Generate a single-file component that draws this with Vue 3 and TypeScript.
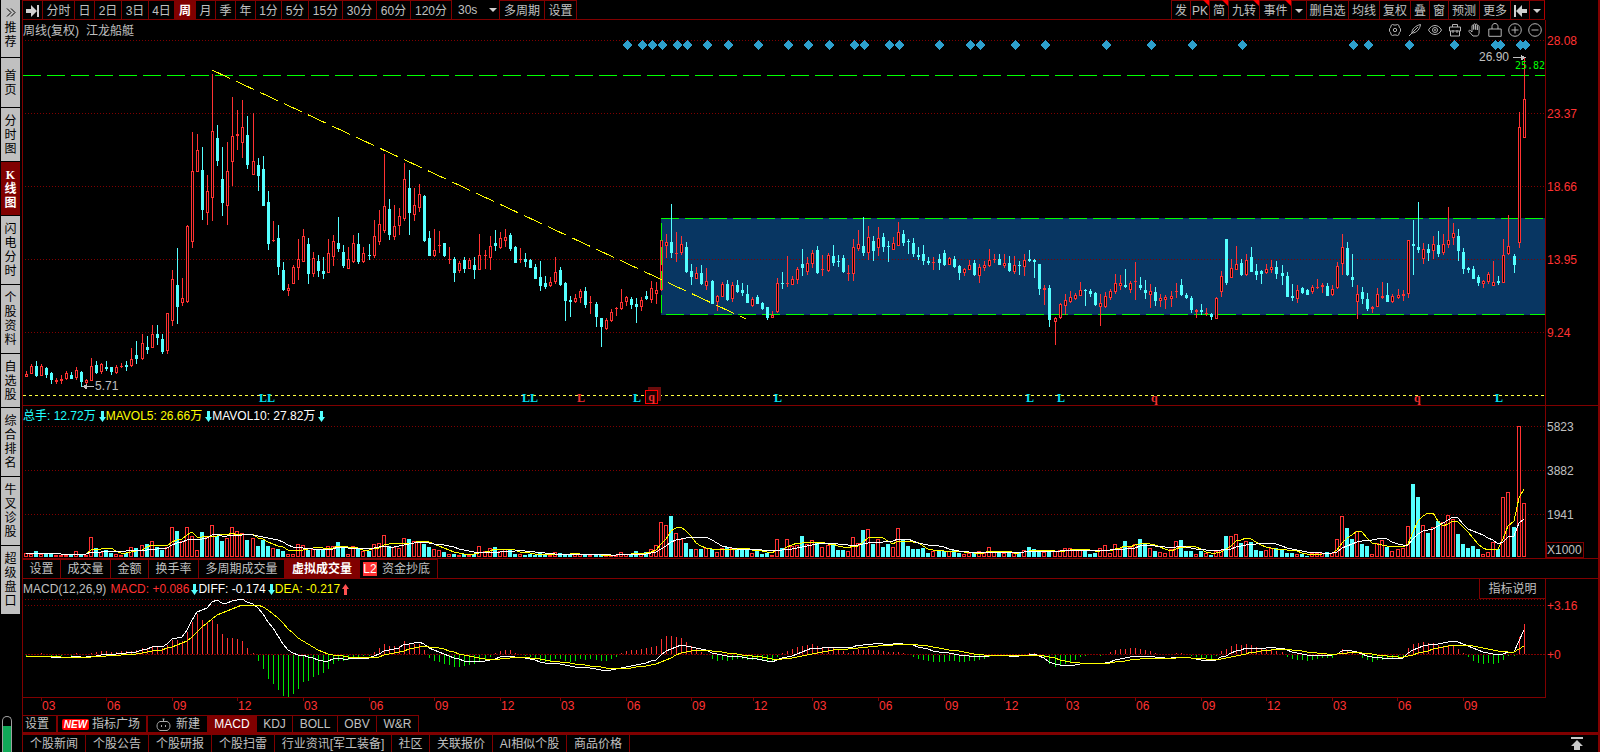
<script setup lang="ts">
interface Candle {
  x: number
  up: boolean
  high: number
  top: number
  bottom: number
  low: number
  volume: number
}

interface Item {
  label: string
  width: number
  active?: boolean
  flag?: boolean
}

// Plot area shared by the three stacked charts.
const LEFT = 23
const WIDTH = 1522
const VOLUME_BASE = 557
const MACD_ZERO = 654

// Weekly bars: direction, high, body top, body bottom, low.
const barSource = `
r371 374 376 376,r364 366 373 373,c361 366 375 376,r364 366 375 375,c367 368 374 377,c372 373 379 383,r378 380 381 383,r375 379 380 383,
r371 373 378 379,c372 375 378 378,r367 370 377 379,c371 372 381 386,r379 380 382 383,r358 366 380 380,c361 365 372 373,r363 364 371 373,
c361 367 368 370,c367 367 371 374,r365 367 372 373,r363 366 366 367,c361 365 366 370,r348 359 365 366,c341 355 358 363,r334 343 358 359,
c336 347 349 353,r325 334 347 347,c325 334 337 344,c334 339 351 353,r313 313 350 353,r270 279 320 325,c248 285 306 323,r278 298 302 305,
r225 226 301 302,r132 171 241 247,r134 150 171 171,c147 170 209 219,r175 191 212 224,r74 131 197 220,c125 138 160 165,c147 179 202 215,
r142 171 205 224,r97 136 161 185,r110 134 135 149,r100 127 142 157,c116 135 164 168,r113 161 174 174,c158 165 175 190,c156 169 205 205,
c191 202 243 249,r221 240 240 241,c225 238 266 274,c262 270 289 290,r284 288 290 295,r265 267 283 283,r239 259 267 279,r229 236 261 261,
c238 244 273 283,r252 258 273 276,c255 261 270 276,c257 271 273 278,r239 253 272 272,r235 241 256 265,c217 243 248 251,c245 252 265 267,
r247 259 268 268,r235 243 261 262,c233 244 261 263,r247 253 261 262,c244 255 255 259,r220 236 255 257,r210 224 241 244,r154 206 230 232,
c199 209 234 239,r205 226 236 239,r208 216 225 234,r163 179 218 220,c170 188 212 234,r188 205 214 220,r184 194 207 211,c195 196 240 241,
c231 238 255 255,r229 250 255 256,r231 245 245 252,c243 243 255 256,r247 259 259 263,c257 259 272 281,r261 263 270 272,c257 260 268 272,
r258 260 268 268,c257 265 269 278,r234 255 269 269,r250 255 255 268,r236 246 257 269,c230 243 245 250,r232 238 247 248,r229 237 240 246,
c233 235 248 250,c246 247 262 262,r248 259 259 262,c253 259 261 266,c259 260 267 267,c264 267 278 278,c261 277 285 290,c276 283 286 288,
r277 282 285 286,r257 272 281 283,c267 270 284 285,c282 283 300 320,c296 300 301 316,r294 298 301 302,r289 291 297 302,c287 291 304 307,
r296 302 302 313,c302 304 316 326,c318 318 326 346,r318 320 328 329,r309 312 320 321,r307 308 308 315,r289 302 308 309,r296 297 301 305,
c297 299 304 308,c298 304 306 322,r297 300 306 310,c291 296 298 299,r281 288 299 302,r282 290 293 303,r240 240 289 290,r234 242 245 257,
c204 242 252 257,r232 253 253 261,r236 244 252 254,c242 247 271 272,c264 271 276 284,r267 273 278 278,c265 273 283 284,r268 281 285 289,
c280 281 303 303,r295 296 301 310,r282 284 296 296,c280 284 299 300,r282 285 298 301,c280 285 291 292,c283 290 292 295,c285 294 302 302,
r297 299 305 306,c295 297 303 303,c302 303 308 309,c307 307 317 319,r311 315 317 317,r278 283 311 312,c272 283 283 288,r256 283 283 286,
r276 279 284 284,r267 269 279 283,c249 264 267 275,r257 263 271 274,r250 253 263 267,c246 250 272 273,r255 269 269 275,r253 255 270 271,
c245 256 262 265,c255 261 261 266,c255 258 271 272,r265 273 273 280,r239 247 273 280,r230 244 248 250,c217 246 252 255,r226 237 252 259,
c236 241 250 260,r227 238 247 255,c233 237 246 251,c241 246 246 261,r237 243 249 249,r222 232 245 245,c230 234 242 245,c239 241 241 253,
c238 243 253 256,c247 255 256 259,c245 254 260 264,c257 261 262 264,r257 262 262 269,c254 259 262 269,c250 253 264 265,r257 258 264 264,
c256 259 266 267,c265 266 272 279,r268 269 272 275,r260 265 269 269,c260 263 274 275,r264 267 275 282,r261 265 267 270,r249 260 265 266,
r254 259 259 262,c254 259 264 264,r254 263 265 267,c256 263 270 271,r256 265 271 273,c261 265 265 274,r254 260 266 275,c250 259 260 261,
c259 260 261 277,c264 264 288 294,r285 288 289 304,c285 288 319 326,r317 318 321 344,r303 304 317 318,r294 300 305 314,r291 297 301 302,
r293 295 298 299,r282 290 295 295,c289 290 290 305,c289 291 293 296,c292 293 304 305,r294 303 306 325,r292 296 306 307,r289 291 297 299,
r274 283 291 293,r275 283 285 289,c269 285 286 287,r281 283 289 292,r262 281 281 299,c277 285 287 289,c280 290 292 298,r284 291 294 307,
c287 292 300 305,r294 298 300 306,r295 297 299 308,r291 296 298 306,r283 291 291 297,c279 285 294 295,c293 295 297 298,c296 298 309 312,
r309 310 311 317,c304 310 311 314,r308 313 313 315,c313 314 316 319,r297 298 318 318,r271 276 291 296,c239 239 282 284,r259 268 277 277,
r246 264 269 269,c259 263 274 275,r254 260 274 275,c247 257 271 271,c264 271 274 279,c270 271 273 283,r264 269 272 273,r260 267 269 272,
c261 267 273 278,c265 273 275 284,c272 276 296 296,c284 296 297 300,r285 290 298 302,c287 288 292 293,c289 290 294 294,r285 287 291 293,
r279 287 287 288,r283 285 286 292,c283 286 295 295,r285 289 294 295,r262 266 287 288,r234 247 263 274,c242 248 274 275,c254 277 279 286,
r285 294 301 318,c287 292 298 303,c293 299 308 310,r306 307 308 312,r288 294 306 306,r282 296 297 298,c283 295 301 301,r294 296 301 302,
r289 295 297 298,r290 294 295 300,r240 240 293 297,c220 244 245 274,c202 247 249 252,r243 249 258 263,c244 249 252 260,r236 244 250 258,
c231 245 253 256,r234 244 252 254,r207 240 244 247,r223 233 237 244,c229 236 250 260,c248 252 268 273,c267 268 269 272,c266 269 278 278,
c275 277 282 285,r280 281 283 287,r272 274 281 283,r261 282 285 285,c276 281 282 284,r239 255 282 282,r215 246 253 254,c254 256 264 272,
r112 127 242 247,r57 99 137 137`

const volumeSource = `
4 3 6 3 4 3 2 2 2 3 6 3 2 20 9 5 7 4 3 2 4 10 9 12 13 16 10 7 10 30 26 16 30 21 7 25 20 32 21 16 19 30 26 24 17 19 11 17 11 9
8 6 3 3 13 12 7 8 8 8 11 11 15 9 3 11 8 6 6 13 14 22 11 10 9 19 18 16 16 13 10 8 7 5 3 3 2 3 2 3 11 6 9 10 6 8 7 3 3 2
3 2 4 2 2 5 4 3 3 3 3 3 2 2 2 2 2 2 5 3 3 6 3 5 8 12 35 32 41 24 18 14 8 8 8 9 8 5 9 10 9 8 8 8 4 7 3 4 2 18
9 18 11 12 21 13 17 14 10 12 13 7 7 6 20 14 27 28 13 18 10 13 10 29 18 11 8 8 9 4 6 6 6 6 7 4 3 4 4 6 4 10 5 4 4 5 4 4 7 10
8 7 5 5 6 7 9 9 7 8 7 3 4 9 12 4 13 9 16 10 13 18 14 9 6 5 4 8 16 17 6 6 3 6 4 2 6 7 21 21 23 14 16 15 7 6 7 9 9 8
4 4 3 3 1 4 4 4 5 4 18 41 29 18 26 13 11 3 14 17 10 6 8 9 31 73 60 32 24 30 36 35 42 38 23 13 9 11 8 3 5 15 8 60 65 30 131 54`

const volumes = volumeSource.trim().split(/\s+/).map(Number)

const candles: Candle[] = barSource
  .replace(/\n/g, '')
  .split(',')
  .map((entry, i) => {
    const [high, top, bottom, low] = entry.slice(1).split(' ').map(Number)
    return {
      x: Math.floor(26.02 + i * 5.0441),
      up: entry[0] === 'r',
      high,
      top,
      bottom,
      low,
      volume: volumes[i] ?? 2,
    }
  })

function candlePath(up: boolean): string {
  return candles
    .filter((c) => c.up === up)
    .map((c) => `M${c.x} ${c.high}h1V${c.low + 1}h-1z`)
    .join('')
}

function bodyPath(up: boolean): string {
  return candles
    .filter((c) => c.up === up)
    .map((c) => `M${c.x - 1} ${c.top}h3V${c.bottom + 1}h-3z`)
    .join('')
}

const hollowPath = candles
  .filter((c) => c.up && c.bottom - c.top > 1)
  .map((c) => `M${c.x} ${c.top + 1}h1V${c.bottom}h-1z`)
  .join('')

function volumePath(up: boolean): string {
  return candles
    .filter((c) => c.up === up)
    .map((c) => `M${c.x - 2} ${VOLUME_BASE}v${-c.volume}h4v${c.volume}z`)
    .join('')
}

const volumeHollow = candles
  .filter((c) => c.up && c.volume > 2)
  .map((c) => `M${c.x - 1} ${VOLUME_BASE - 1}v${2 - c.volume}h2v${c.volume - 2}z`)
  .join('')

function average(span: number): string {
  return candles
    .map((c, i) => {
      const part = candles.slice(Math.max(0, i - span + 1), i + 1)
      const mean = part.reduce((sum, p) => sum + p.volume, 0) / part.length
      return `${c.x},${Math.round(VOLUME_BASE - mean)}`
    })
    .join(' ')
}

const ma5 = average(5)
const ma10 = average(10)

const macd = (() => {
  const closes = candles.map((c) => -(c.up ? c.top : c.bottom))
  let fast = closes[0] + 3
  let slow = closes[0] + 6
  let dea = -2
  return closes.map((close, i) => {
    fast += ((close - fast) * 2) / 13
    slow += ((close - slow) * 2) / 27
    const diff = fast - slow
    dea += ((diff - dea) * 2) / 10
    return { x: candles[i].x, diff, dea, bar: Math.round(2 * (diff - dea)) }
  })
})()

const diffLine = macd.map((m) => `${m.x},${Math.round(MACD_ZERO - m.diff)}`).join(' ')
const deaLine = macd.map((m) => `${m.x},${Math.round(MACD_ZERO - m.dea)}`).join(' ')
const barsUp = macd.filter((m) => m.bar > 0).map((m) => `M${m.x} ${MACD_ZERO}h1v${-m.bar}h-1z`).join('')
const barsDown = macd.filter((m) => m.bar < 0).map((m) => `M${m.x} ${MACD_ZERO + 1}h1v${-m.bar}h-1z`).join('')

const diamonds = [
  627, 642, 652, 662, 677, 687, 707, 728, 758, 788, 808, 829, 854, 864, 889, 899, 939, 970, 980, 1015, 1045,
  1106, 1151, 1192, 1242, 1353, 1368, 1409, 1454, 1495, 1500, 1520, 1525,
]
const diamondPath = diamonds.map((x) => `M${x} 40l5 5-5 5-5-5z`).join('')

const marks = [
  { x: 259, text: 'LL', kind: 'buy' },
  { x: 522, text: 'LL', kind: 'buy' },
  { x: 577, text: 'L', kind: 'sell' },
  { x: 633, text: 'L', kind: 'buy' },
  { x: 645, text: 'q', kind: 'boxed' },
  { x: 774, text: 'L', kind: 'buy' },
  { x: 1026, text: 'L', kind: 'buy' },
  { x: 1057, text: 'L', kind: 'buy' },
  { x: 1151, text: 'q', kind: 'sell' },
  { x: 1414, text: 'q', kind: 'sell' },
  { x: 1495, text: 'L', kind: 'buy' },
]

const dates = [
  [41, '03'], [106, '06'], [172, '09'], [237, '12'], [303, '03'], [369, '06'], [434, '09'], [500, '12'],
  [560, '03'], [626, '06'], [691, '09'], [753, '12'], [812, '03'], [878, '06'], [944, '09'], [1004, '12'],
  [1065, '03'], [1135, '06'], [1201, '09'], [1266, '12'], [1332, '03'], [1397, '06'], [1463, '09'],
].map(([x, label]) => ({ x: x as number, label: label as string }))

const percent = (x: number) => `${((x - LEFT) / WIDTH) * 100}%`

const sideItems = [
  { label: '推荐', size: 'top' },
  { label: '首页', size: 'two' },
  { label: '分时图', size: 'three' },
  { label: 'K线图', size: 'three', active: true },
  { label: '闪电分时', size: 'four' },
  { label: '个股资料', size: 'four' },
  { label: '自选股', size: 'three' },
  { label: '综合排名', size: 'four' },
  { label: '牛叉诊股', size: 'four' },
  { label: '超级盘口', size: 'four' },
]

const periods: Item[] = [
  { label: '分时', width: 32 },
  { label: '日', width: 20 },
  { label: '2日', width: 27 },
  { label: '3日', width: 27 },
  { label: '4日', width: 26 },
  { label: '周', width: 21, active: true },
  { label: '月', width: 20 },
  { label: '季', width: 20 },
  { label: '年', width: 20 },
  { label: '1分', width: 26 },
  { label: '5分', width: 27 },
  { label: '15分', width: 34 },
  { label: '30分', width: 34 },
  { label: '60分', width: 34 },
  { label: '120分', width: 41 },
]

const tools: Item[] = [
  { label: '发', width: 19 },
  { label: 'PK', width: 19, flag: true },
  { label: '简', width: 19, flag: true },
  { label: '九转', width: 31, flag: true },
  { label: '事件', width: 32, flag: true },
  { label: '', width: 15 },
  { label: '删自选', width: 42 },
  { label: '均线', width: 31 },
  { label: '复权', width: 31 },
  { label: '叠', width: 19 },
  { label: '窗', width: 19 },
  { label: '预测', width: 31 },
  { label: '更多', width: 31 },
]

const volumeTabs: Item[] = [
  { label: '设置', width: 38 },
  { label: '成交量', width: 50 },
  { label: '金额', width: 38 },
  { label: '换手率', width: 50 },
  { label: '多周期成交量', width: 86 },
  { label: '虚拟成交量', width: 75, active: true },
]

const indicatorTabs: Item[] = [
  { label: 'MACD', width: 49, active: true },
  { label: 'KDJ', width: 36 },
  { label: 'BOLL', width: 45 },
  { label: 'OBV', width: 39 },
  { label: 'W&R', width: 42 },
]

const newsTabs: Item[] = [
  { label: '个股新闻', width: 63 },
  { label: '个股公告', width: 63 },
  { label: '个股研报', width: 63 },
  { label: '个股扫雷', width: 63 },
  { label: '行业资讯[军工装备]', width: 117 },
  { label: '社区', width: 38 },
  { label: '关联报价', width: 63 },
  { label: 'AI相似个股', width: 74 },
  { label: '商品价格', width: 63 },
]

const px = (n: number) => `${n}px`
</script>

<template>
  <div class="terminal">
    <nav class="side" aria-label="功能">
      <button
        v-for="item in sideItems"
        :key="item.label"
        type="button"
        :class="['side-item', item.size, { active: item.active }]"
      >
        <svg v-if="item.size === 'top'" class="chevrons" viewBox="0 0 10 9" aria-hidden="true">
          <path d="M1 0.5l4 4-4 4M5 0.5l4 4-4 4" />
        </svg>
        <span class="side-text">{{ item.label }}</span>
      </button>
      <span class="capsule"><span class="level"></span></span>
    </nav>

    <main class="main">
      <header class="toolbar">
        <div class="group">
          <button type="button" class="tool first" aria-label="右移">
            <svg class="jump" viewBox="0 0 13 12" aria-hidden="true"><path d="M0 4h5V0l6 6-6 6V8H0zM11 0h2v12h-2z" /></svg>
          </button>
          <button
            v-for="p in periods"
            :key="p.label"
            type="button"
            :class="['tool', { active: p.active }]"
            :style="{ width: px(p.width) }"
          >{{ p.label }}</button>
          <span class="picker">
            <select aria-label="秒周期"><option>30s</option></select>
            <svg class="caret" viewBox="0 0 8 4" aria-hidden="true"><path d="M0 0h8L4 4z" /></svg>
          </span>
          <button type="button" class="tool multi">多周期</button>
          <button type="button" class="tool last">设置</button>
        </div>
        <div class="group right">
          <button
            v-for="t in tools"
            :key="t.label"
            type="button"
            class="tool"
            :style="{ width: px(t.width) }"
            :aria-label="t.label || '事件菜单'"
          >
            {{ t.label }}
            <span v-if="t.flag" class="flag"></span>
            <svg v-if="!t.label" class="caret" viewBox="0 0 8 4" aria-hidden="true"><path d="M0 0h8L4 4z" /></svg>
          </button>
          <button type="button" class="tool back" aria-label="左移">
            <svg class="jump" viewBox="0 0 13 12" aria-hidden="true"><path d="M0 0h2v12H0zM2 6l6-6v4h5v4H8v4z" /></svg>
          </button>
          <button type="button" class="tool end" aria-label="菜单">
            <svg class="caret" viewBox="0 0 8 4" aria-hidden="true"><path d="M0 0h8L4 4z" /></svg>
          </button>
        </div>
      </header>

      <section class="panel price">
        <div class="plot">
          <svg class="chart" viewBox="23 20 1522 385" preserveAspectRatio="none" shape-rendering="crispEdges" role="img" aria-label="周线">
            <rect x="661" y="218" width="884" height="97" fill="#083662" />
            <path class="grid" d="M25 40.5H1545M25 113.5H1545M25 186.5H1545M25 259.5H1545M25 332.5H1545" />
            <path class="green" d="M23 75.5H1545M661 218.5H1545" />
            <path class="green" stroke-dashoffset="-5" d="M661 314.5H1545" />
            <path class="bars-up" :d="candlePath(true)" />
            <path class="bars-up" :d="bodyPath(true)" />
            <path fill="#000" :d="hollowPath" />
            <path class="bars-down" :d="candlePath(false)" />
            <path class="bars-down" :d="bodyPath(false)" />
            <path class="green" stroke-dashoffset="-5" d="M661.5 218V314" />
            <path class="trend" pathLength="534" d="M212 70L746 319" />
            <path class="baseline" d="M23 395.5H1545" />
            <path class="diamond" :d="diamondPath" />
            <path class="arrow" d="M1513 57.5h12M83 386.5h11" />
            <path fill="#c0c0c0" d="M1521 55l5 2.500-5 3zM87 384l-5 2.500 5 3z" />
          </svg>
          <div class="caption"><span>周线(复权)</span><span>江龙船艇</span></div>
          <div class="tool-icons">
            <button type="button" aria-label="设置"><svg viewBox="0 0 14 14"><path d="M4.500 1.500l1.500.500h2l1.500-.500 1.500 1 .2 1.700 1.300 1.600v2.400l-1.300 1.600-.2 1.700-1.500 1-1.500-.500H6l-1.500.500-1.500-1-.2-1.700L1.500 8.200V5.800l1.300-1.600L3 2.500z" /><circle cx="7" cy="7" r="1.700" /></svg></button>
            <button type="button" aria-label="画笔"><svg viewBox="0 0 14 14"><path d="M1 13l3-3C3.500 6 8 2.500 12.500 1.500 12 5.500 9 10 4 10l6-6" /></svg></button>
            <button type="button" aria-label="显示"><svg viewBox="0 0 14 14"><path d="M.5 7C3.500 1 10.500 1 13.500 7 10.500 13 3.500 13 .5 7z" /><circle cx="7" cy="7" r="2.500" /><circle cx="7" cy="7" r=".6" /></svg></button>
            <button type="button" aria-label="工具箱"><svg viewBox="0 0 14 14"><path d="M1.500 4h11v4h-11zM2.500 8v5h9V8M4.500 4V1.500h5V4M5 7v3M9 7v3" /></svg></button>
            <button type="button" aria-label="拖动"><svg viewBox="0 0 14 14"><path d="M5 13L1 8.500c-.6-1 .8-1.800 1.500-1L4 9V3c0-1.200 1.700-1.200 1.700 0v3.500V1.700c0-1.200 1.800-1.200 1.800 0v4.800V2c0-1.200 1.800-1.200 1.800 0v5V3.500c0-1.200 1.800-1.200 1.800 0V9c0 2-.6 3-1.600 4z" /></svg></button>
            <button type="button" aria-label="锁定"><svg viewBox="0 0 14 14"><path d="M.8 6h12.400v7.300H.8zM4 6V3.500c0-4 6-4 6 0V6" /></svg></button>
            <button type="button" aria-label="放大"><svg viewBox="0 0 14 14"><circle cx="7" cy="7" r="6.300" /><path d="M3.500 7h7M7 3.500v7" /></svg></button>
            <button type="button" aria-label="缩小"><svg viewBox="0 0 14 14"><circle cx="7" cy="7" r="6.300" /><path d="M3.500 7h7" /></svg></button>
          </div>
          <span class="note peak" :style="{ left: percent(1479) }">26.90</span>
          <span class="note trough" :style="{ left: percent(95) }">5.71</span>
          <span class="note level-text">25.82</span>
          <span
            v-for="m in marks"
            :key="m.x"
            :class="['mark', m.kind]"
            :style="{ left: percent(m.x) }"
          >{{ m.text }}</span>
        </div>
        <div class="axis price-axis">
          <span>28.08</span><span>23.37</span><span>18.66</span><span>13.95</span><span>9.24</span>
        </div>
      </section>

      <section class="panel volume">
        <div class="plot">
          <svg class="chart" viewBox="23 406 1522 152" preserveAspectRatio="none" shape-rendering="crispEdges" role="img" aria-label="成交量">
            <path class="grid" d="M25 426.500H1545M25 470.500H1545M25 514.500H1545" />
            <path class="bars-up" :d="volumePath(true)" />
            <path fill="#000" :d="volumeHollow" />
            <path class="bars-down" :d="volumePath(false)" />
            <polyline class="line yellow" :points="ma5" />
            <polyline class="line white" :points="ma10" />
          </svg>
          <div class="legend">
            <span class="cyan">总手: 12.72万</span>
            <svg class="down" viewBox="0 0 7 11"><path d="M2 0h3v6h2L3.500 11 0 6h2z" /></svg>
            <span class="yellow-text">MAVOL5: 26.66万</span>
            <svg class="down" viewBox="0 0 7 11"><path d="M2 0h3v6h2L3.500 11 0 6h2z" /></svg>
            <span class="white-text">MAVOL10: 27.82万</span>
            <svg class="down" viewBox="0 0 7 11"><path d="M2 0h3v6h2L3.500 11 0 6h2z" /></svg>
          </div>
        </div>
        <div class="axis volume-axis">
          <span>5823</span><span>3882</span><span>1941</span><span class="unit">X1000</span>
        </div>
      </section>

      <div class="tabs volume-tabs">
        <button
          v-for="t in volumeTabs"
          :key="t.label"
          type="button"
          :class="['tab', { active: t.active }]"
          :style="{ width: px(t.width) }"
        >{{ t.label }}</button>
        <button type="button" class="tab flow"><span class="badge">L2</span>资金抄底</button>
      </div>

      <section class="panel macd">
        <div class="plot">
          <svg class="chart" viewBox="23 579 1522 118" preserveAspectRatio="none" shape-rendering="crispEdges" role="img" aria-label="MACD">
            <path class="grid" d="M25 599.500H1545M25 605.500H1545" />
            <path class="grid zero" d="M25 654.500H1545" />
            <path class="bars-up" :d="barsUp" />
            <path fill="#00e600" :d="barsDown" />
            <polyline class="line white" :points="diffLine" />
            <polyline class="line yellow" :points="deaLine" />
          </svg>
          <div class="legend">
            <span class="gray wide">MACD(12,26,9)</span>
            <span class="red">MACD: +0.086</span>
            <svg class="down" viewBox="0 0 7 11"><path d="M2 0h3v6h2L3.500 11 0 6h2z" /></svg>
            <span class="white-text">DIFF: -0.174</span>
            <svg class="down" viewBox="0 0 7 11"><path d="M2 0h3v6h2L3.500 11 0 6h2z" /></svg>
            <span class="yellow-text">DEA: -0.217</span>
            <svg class="up" viewBox="0 0 7 11"><path d="M2 11h3V5h2L3.500 0 0 5h2z" /></svg>
          </div>
          <button type="button" class="explain">指标说明</button>
        </div>
        <div class="axis macd-axis"><span>+3.16</span><span>+0</span></div>
      </section>

      <div class="dates">
        <div class="date-track">
          <span v-for="d in dates" :key="d.x" class="date" :style="{ left: percent(d.x) }">{{ d.label }}</span>
        </div>
      </div>

      <div class="tabs indicator-tabs">
        <button type="button" class="tab config">设置</button>
        <button type="button" class="tab market"><span class="new">NEW</span>指标广场</button>
        <button type="button" class="tab create">
          <svg class="robot" viewBox="0 0 15 13" aria-hidden="true">
            <path d="M4 3.500h7c4 1 4 8 0 9H4c-4-1-4-8 0-9zM7.500 1v2.500M6.500 1h2" /><path d="M5.500 7v2M9.500 7v2" />
          </svg>新建
        </button>
        <button
          v-for="t in indicatorTabs"
          :key="t.label"
          type="button"
          :class="['tab', { active: t.active }]"
          :style="{ width: px(t.width) }"
        >{{ t.label }}</button>
      </div>

      <footer class="tabs news">
        <button
          v-for="t in newsTabs"
          :key="t.label"
          type="button"
          class="tab"
          :style="{ width: px(t.width) }"
        >{{ t.label }}</button>
        <button type="button" class="to-top" aria-label="展开">
          <svg viewBox="0 0 12 13" aria-hidden="true"><path d="M0 0h12v2H0zM6 3l6 6H9v4H3V9H0z" /></svg>
        </button>
      </footer>
    </main>
  </div>
</template>

<style>
body {
  margin: 0;
  background: #000;
}
</style>

<style scoped>
.terminal {
  display: flex;
  min-height: 100vh;
  background: #000;
  color: #c0c0c0;
  font: 12px/14px 'Liberation Sans', 'Noto Sans CJK SC', sans-serif;
}

button,
select {
  box-sizing: border-box;
  margin: 0;
  padding: 0;
  border: 0;
  border-radius: 0;
  background: transparent;
  color: inherit;
  font: inherit;
  white-space: nowrap;
}

svg {
  display: block;
}

.side {
  display: flex;
  flex: none;
  flex-direction: column;
  width: 21px;
  padding-left: 1px;
}

.side-item {
  display: flex;
  flex-direction: column;
  align-items: center;
  justify-content: center;
  width: 19px;
  margin-bottom: 1px;
  background: #c0c0c0;
  color: #000;
}

.side-text {
  width: 12px;
  white-space: normal;
  word-break: break-all;
}

.side-item.top {
  height: 57px;
}

.side-item.two {
  height: 49px;
}

.side-item.three {
  height: 53px;
}

.side-item.four {
  height: 68px;
}

.side-item.active {
  background: #800000;
  color: #fff;
  font-family: 'Liberation Serif', 'Noto Sans CJK SC', serif;
  font-weight: bold;
}

.chevrons {
  width: 10px;
  height: 9px;
  margin-bottom: 4px;
  fill: none;
  stroke: #000;
}

.capsule {
  display: flex;
  box-sizing: border-box;
  width: 10px;
  height: 36px;
  margin-top: auto;
  margin-left: 1px;
  padding-top: 9px;
  border: 1px solid #a0a0a0;
  border-bottom: 0;
  border-radius: 5px 5px 0 0;
}

.level {
  flex: 1;
  background: #10a858;
}

.main {
  display: flex;
  flex: 1;
  flex-direction: column;
  min-width: 0;
  border-right: 2px solid #800000;
  border-left: 1px solid #800000;
}

.toolbar {
  display: flex;
  justify-content: space-between;
  box-sizing: border-box;
  height: 20px;
  margin-right: 53px;
  border-bottom: 1px solid #800000;
}

.group {
  display: flex;
}

.tool {
  position: relative;
  display: flex;
  align-items: center;
  justify-content: center;
  flex: none;
  height: 19px;
  padding-top: 2px;
  border-top: 1px solid #800000;
  border-left: 1px solid #800000;
}

.tool.first {
  width: 19px;
  border-left: 0;
}

.tool.active {
  background: #800000;
  color: #fff;
  font-weight: bold;
}

.tool.multi {
  width: 45px;
}

.tool.last {
  width: 33px;
  border-right: 1px solid #800000;
}

.tool.back {
  width: 19px;
}

.tool.end {
  width: 16px;
  border-right: 1px solid #b00000;
}

.jump {
  width: 13px;
  height: 12px;
  fill: #d0d0d0;
}

.caret {
  width: 8px;
  height: 4px;
  fill: #d0d0d0;
}

.picker {
  display: flex;
  align-items: center;
  width: 48px;
  padding: 1px 2px 0 6px;
  box-sizing: border-box;
  border-left: 1px solid #800000;
}

.picker select {
  flex: 1;
  min-width: 0;
  appearance: none;
}

.flag {
  position: absolute;
  top: -1px;
  right: 0;
  border-top: 6px solid #f00;
  border-left: 6px solid transparent;
}

.panel {
  display: flex;
}

.plot {
  position: relative;
  flex: 1;
  min-width: 0;
}

.chart {
  width: 100%;
}

.axis {
  display: flex;
  flex: none;
  flex-direction: column;
  box-sizing: border-box;
  width: 53px;
  padding-left: 1px;
  border-left: 1px solid #800000;
  color: #ff3232;
}

.price,
.volume {
  border-bottom: 1px solid #800000;
}

.price .chart {
  height: 385px;
}

.volume .chart {
  height: 152px;
}

.macd .chart {
  height: 118px;
}

.macd .plot {
  border-bottom: 1px solid #800000;
}

.price-axis {
  gap: 59px;
  padding-top: 14px;
}

.volume-axis {
  gap: 30px;
  padding-top: 14px;
  color: #c0c0c0;
}

.unit {
  width: 36px;
  margin: -10px 0 0 -1px;
  border: 1px solid #800000;
}

.macd-axis {
  gap: 35px;
  padding-top: 20px;
}

.grid {
  fill: none;
  stroke: #800000;
  stroke-dasharray: 1 2;
}

.zero {
  stroke-dasharray: 2 1;
}

.green {
  fill: none;
  stroke: #00ff00;
  stroke-dasharray: 18 6;
}

.trend {
  fill: none;
  stroke: #ffff00;
  stroke-dasharray: 18 6;
}

.baseline {
  fill: none;
  stroke: #ffff40;
  stroke-dasharray: 3 3;
}

.bars-up {
  fill: #ff3232;
}

.bars-down {
  fill: #54ffff;
}

.diamond {
  fill: #2e9fcc;
}

.arrow {
  stroke: #c0c0c0;
}

.line {
  fill: none;
}

.yellow {
  stroke: #ffff00;
}

.white {
  stroke: #fff;
}

.caption {
  position: absolute;
  top: 4px;
  left: 0;
  display: flex;
  gap: 7px;
}

.tool-icons {
  position: absolute;
  top: 3px;
  right: 3px;
  display: flex;
  gap: 6px;
}

.tool-icons svg {
  width: 14px;
  height: 14px;
  fill: none;
  stroke: #b4b4b4;
}

.note {
  position: absolute;
}

.peak {
  top: 30px;
}

.trough {
  top: 359px;
}

.level-text {
  top: 39px;
  right: 0;
  color: #00ff00;
  font: 10px/14px 'DejaVu Sans Mono', monospace;
}

.mark {
  position: absolute;
  top: 371px;
  font: bold 12px/14px 'Liberation Serif', serif;
}

.buy {
  color: #00e0f0;
}

.sell {
  color: #f03030;
}

.boxed {
  top: 370px;
  width: 11px;
  height: 12px;
  border: 1px solid #f00;
  background: #200000;
  box-shadow: 3px -3px 0 #6c0c0c;
  color: #f03030;
  line-height: 12px;
  text-align: center;
}

.legend {
  position: absolute;
  top: 3px;
  left: 0;
  display: flex;
  align-items: center;
}

.legend svg {
  width: 7px;
  height: 11px;
}

.volume .legend svg {
  margin-left: 3px;
}

.macd .legend svg {
  margin-left: 2px;
}

.down {
  fill: #54ffff;
}

.up {
  fill: #ff5050;
}

.cyan {
  color: #20ffff;
}

.yellow-text {
  color: #ffff00;
}

.white-text {
  color: #fff;
}

.gray {
  color: #c0c0c0;
}

.wide {
  margin-right: 4px;
}

.red {
  color: #ff3232;
}

.explain {
  position: absolute;
  top: 0;
  right: 0;
  width: 66px;
  height: 20px;
  border-bottom: 1px solid #800000;
  border-left: 1px solid #800000;
}

.tabs {
  display: flex;
}

.tab {
  flex: none;
  height: 17px;
  border-right: 1px solid #800000;
}

.tab.active {
  background: #800000;
  color: #fff;
}

.volume-tabs {
  border-bottom: 1px solid #800000;
}

.volume-tabs .tab {
  height: 19px;
  border-top: 1px solid #800000;
}

.volume-tabs .active {
  font-weight: bold;
}

.flow {
  display: flex;
  align-items: center;
  gap: 5px;
  width: 78px;
  padding-left: 3px;
}

.badge {
  width: 14px;
  background: #ff3232;
  color: #fff;
  text-align: center;
}

.dates {
  height: 17px;
  margin-right: 53px;
}

.date-track {
  position: relative;
}

.date {
  position: absolute;
  top: 0;
  padding: 1px 0 0 1px;
  color: #ff3232;
}

.date::before {
  position: absolute;
  top: 0;
  left: 0;
  width: 1px;
  height: 3px;
  background: #800000;
  content: '';
}

.indicator-tabs {
  border-bottom: 3px solid #800000;
}

.indicator-tabs .tab {
  border-top: 1px solid #800000;
}

.config {
  width: 34px;
  padding-right: 5px;
}

.market {
  display: flex;
  align-items: center;
  gap: 3px;
  width: 90px;
  padding-left: 4px;
  border-left: 1px solid #800000;
}

.new {
  width: 27px;
  border-radius: 2px;
  background: #f00;
  color: #fff;
  font: italic bold 10px/11px 'Liberation Sans', sans-serif;
}

.create {
  display: flex;
  align-items: center;
  gap: 5px;
  width: 61px;
  padding-left: 8px;
  border-left: 1px solid #800000;
}

.robot {
  width: 15px;
  height: 13px;
  fill: none;
  stroke: #a8a8a8;
}

.to-top {
  margin: 0 15px 0 auto;
}

.to-top svg {
  width: 12px;
  height: 13px;
  fill: #c8c8c8;
}
</style>
